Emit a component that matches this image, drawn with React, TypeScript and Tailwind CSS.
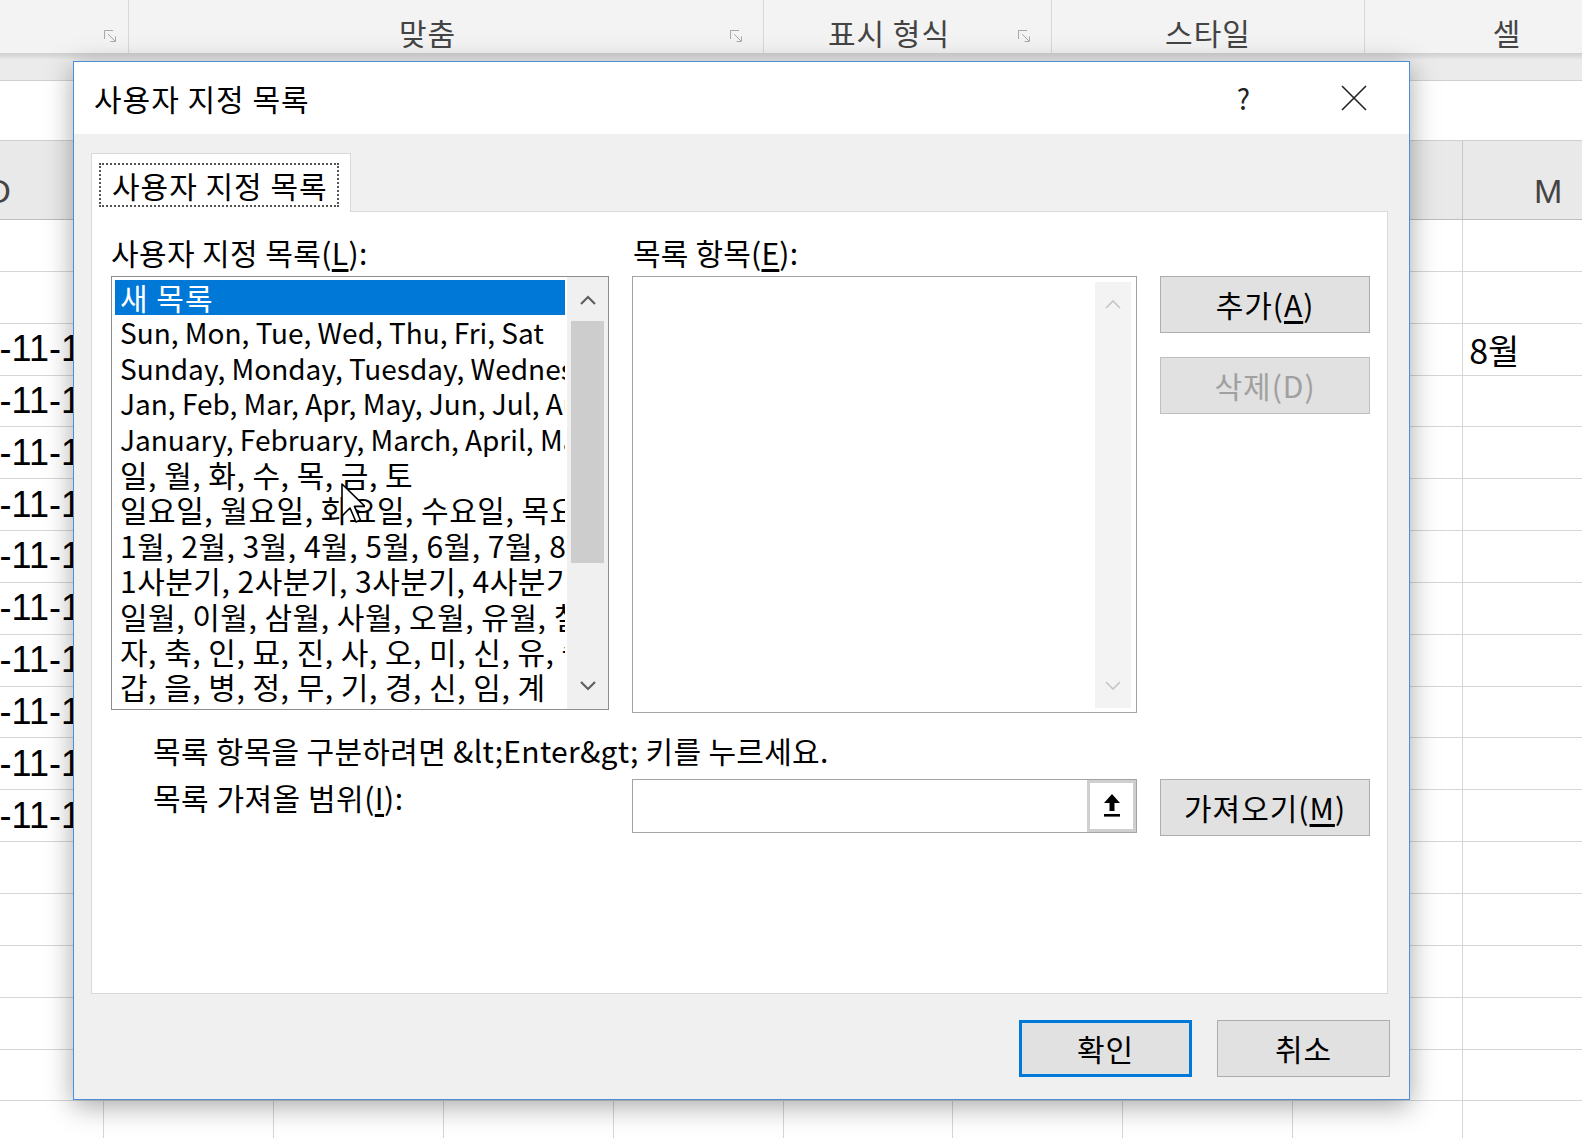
import React from 'react'

const ui = "font-['Noto_Sans_CJK_KR',sans-serif]"
const sheet = "font-['Liberation_Sans','Noto_Sans_CJK_KR',sans-serif]"

// latin rows keep the plain size, hangul rows run a bit wider
const listItems: { text: string; ko: boolean }[] = [
  { text: 'Sun, Mon, Tue, Wed, Thu, Fri, Sat', ko: false },
  { text: 'Sunday, Monday, Tuesday, Wednesday, Thursday, Friday, Saturday', ko: false },
  { text: 'Jan, Feb, Mar, Apr, May, Jun, Jul, Aug, Sep, Oct, Nov, Dec', ko: false },
  { text: 'January, February, March, April, May, June, July, August', ko: false },
  { text: '일, 월, 화, 수, 목, 금, 토', ko: true },
  { text: '일요일, 월요일, 화요일, 수요일, 목요일, 금요일, 토요일', ko: true },
  { text: '1월, 2월, 3월, 4월, 5월, 6월, 7월, 8월, 9월, 10월', ko: true },
  { text: '1사분기, 2사분기, 3사분기, 4사분기', ko: true },
  { text: '일월, 이월, 삼월, 사월, 오월, 유월, 칠월, 팔월', ko: true },
  { text: '자, 축, 인, 묘, 진, 사, 오, 미, 신, 유, 술, 해', ko: true },
  { text: '갑, 을, 병, 정, 무, 기, 경, 신, 임, 계', ko: true },
]

const otherCols = ['E', 'F', 'G', 'H', 'I', 'J', 'K', 'L']
const dates = ['2019-11-10', '2019-11-12', '2019-11-13', '2019-11-14', '2019-11-15', '2019-11-16', '2019-11-17', '2019-11-18', '2019-11-19', '2019-11-19']

function Launcher() {
  return (
    <svg width="14" height="14" viewBox="0 0 14 14" fill="none" stroke="#a8a8a8" strokeWidth="1">
      <path d="M1.5 10V1.5H10" />
      <path d="M5 5l7 7M12.5 7.5v5h-5" />
    </svg>
  )
}

function Chevron({ up, color, width }: { up?: boolean; color: string; width: number }) {
  return (
    <svg width="18" height="10" viewBox="0 0 18 10" fill="none" stroke={color} strokeWidth={width}>
      {up ? <path d="M2 9L9 2l7 7" /> : <path d="M2 1l7 7 7-7" />}
    </svg>
  )
}

function Btn({ children, className = '' }: { children: React.ReactNode; className?: string }) {
  return (
    <div className={`flex items-center justify-center bg-[#e1e1e1] text-[30px] tracking-[1px] ${className}`}>
      {children}
    </div>
  )
}

function Sheet() {
  const rows = Array.from({ length: 18 }, (_, i) => i)
  return (
    <div className={`${sheet} flex flex-col`}>
      {/* ribbon group labels */}
      <div className={`${ui} h-[53px] bg-[#f3f3f3] flex text-[30px] tracking-[1px] text-[#444]`}>
        <div className="w-[129px] shrink-0 flex items-end justify-end pr-[11px] pb-[10px] border-r border-[#d8d8d8]">
          <Launcher />
        </div>
        <div className="w-[635px] shrink-0 flex border-r border-[#d8d8d8]">
          <div className="flex-1 text-center leading-[64px]">맞춤</div>
          <div className="w-[37px] flex items-end pb-[10px] pl-[3px]"><Launcher /></div>
        </div>
        <div className="w-[288px] shrink-0 flex border-r border-[#d8d8d8]">
          <div className="flex-1 text-center leading-[64px]">표시 형식</div>
          <div className="w-[37px] flex items-end pb-[10px] pl-[3px]"><Launcher /></div>
        </div>
        <div className="w-[313px] shrink-0 text-center leading-[64px] border-r border-[#d8d8d8]">스타일</div>
        <div className="w-[284px] shrink-0 text-center leading-[64px]">셀</div>
      </div>
      <div className="h-[6px] bg-gradient-to-b from-[#cfcfcf] to-[#e6e6e6]" />
      <div className="h-[22px] bg-[#ebebeb] border-b border-[#d0d0d0]" />
      <div className="h-[60px] bg-white border-b border-[#cfcfcf]" />
      {/* column headers */}
      <div className="h-[79px] flex bg-[#e9e9e9] border-b border-[#bdbdbd] text-[34px] text-[#444] -ml-[120px]">
        <div className="w-[224px] shrink-0 flex items-center justify-center pt-[22px] pl-[14px] border-r border-[#c8c8c8]">D</div>
        {otherCols.map(c => (
          <div key={c} className="w-[169.9px] shrink-0 flex items-center justify-center pt-[22px] border-r border-[#c8c8c8]">{c}</div>
        ))}
        <div className="w-[169.9px] shrink-0 flex items-center justify-center pt-[22px]">M</div>
      </div>
      {rows.map(r => (
        <div key={r} className="h-[51.85px] shrink-0 flex border-b border-[#d6d6d6] text-[36px] text-black -ml-[120px]">
          <div className="w-[224px] shrink-0 flex items-center justify-end pr-[2px] border-r border-[#d6d6d6]">
            {r >= 2 && r <= 11 ? dates[r - 2] : ''}
          </div>
          {otherCols.map(c => (
            <div key={c} className="w-[169.9px] shrink-0 border-r border-[#d6d6d6]" />
          ))}
          <div className={`${ui} w-[169.9px] shrink-0 flex items-center pl-[6px] text-[34px]`}>{r === 2 ? '8월' : ''}</div>
        </div>
      ))}
    </div>
  )
}

function Dialog() {
  return (
    <div className={`${ui} absolute left-[73px] top-[61px] w-[1337px] h-[1039px] flex flex-col border border-[#4a90d9] bg-[#f0f0f0] text-black shadow-[0_6px_26px_rgba(0,0,0,0.35)]`}>
      {/* title bar */}
      <div className="h-[72px] shrink-0 bg-white flex items-center">
        <span className="ml-[20px] flex-1 text-[30px] tracking-[1px]">사용자 지정 목록</span>
        <span className="mr-[91px] text-[28px] text-[#222]">?</span>
        <svg className="mr-[42px]" width="26" height="26" viewBox="0 0 26 26" fill="none" stroke="#222" strokeWidth="1.6">
          <path d="M1 1l24 24M25 1L1 25" />
        </svg>
      </div>

      <div className="flex-1 flex flex-col pl-[17px] pr-[21px] pt-[19px]">
        {/* tab */}
        <div className="relative z-10 -mb-px w-[260px] h-[59px] bg-white border border-b-0 border-[#d9d9d9] pt-[9px] pl-[7px]">
          <div className="w-[240px] h-[44px] border-2 border-dotted border-[#555] flex items-center pl-[11px] text-[30px] tracking-[1px] leading-none">
            사용자 지정 목록
          </div>
        </div>

        {/* tab panel */}
        <div className="h-[783px] bg-white border border-[#d9d9d9] pl-[19px] pt-[22px]">
          <div className="flex items-start">
            <div className="w-[498px] shrink-0">
              <div className="h-[36px] leading-[36px] text-[30px] tracking-[0.4px]">
                사용자 지정 목록(<span className="underline underline-offset-[4px]">L</span>):
              </div>
              <div className="mt-[6px] h-[434px] border border-[#8e8e8e] flex">
                <div className="w-[455px] pl-[3px] pt-[3px] overflow-hidden">
                  <div className="w-[450px] h-[35.4px] bg-[#0078d7] text-white pl-[5px] leading-[35px] text-[30px] tracking-[1px] whitespace-nowrap">새 목록</div>
                  {listItems.map(it => (
                    <div
                      key={it.text}
                      className={`w-[450px] h-[35.4px] pl-[5px] leading-[35px] whitespace-nowrap overflow-hidden ${it.ko ? 'text-[30px] tracking-[0.5px]' : 'text-[28px]'}`}
                    >
                      {it.text}
                    </div>
                  ))}
                </div>
                <div className="w-[41px] flex flex-col bg-[#f0f0f0]">
                  <div className="h-[44px] flex items-center justify-center pt-[2px]"><Chevron up color="#606060" width={2.2} /></div>
                  <div className="h-[242px] mx-[4px] bg-[#cdcdcd]" />
                  <div className="flex-1 flex items-end justify-center pb-[18px]"><Chevron color="#606060" width={2.2} /></div>
                </div>
              </div>
            </div>

            <div className="ml-[23px] w-[505px] shrink-0">
              <div className="h-[36px] leading-[36px] pl-[1px] text-[30px] tracking-[0.2px]">
                목록 항목(<span className="underline underline-offset-[4px]">E</span>):
              </div>
              <div className="mt-[6px] h-[437px] border border-[#a3a3a3] bg-white flex justify-end pt-[5px] pb-[4px] pr-[5px]">
                <div className="w-[36px] bg-[#f3f3f3] flex flex-col justify-between items-center py-[17px]">
                  <Chevron up color="#c6c6c6" width={1.6} />
                  <Chevron color="#c6c6c6" width={1.6} />
                </div>
              </div>
            </div>

            <div className="ml-[23px] w-[210px] shrink-0 pt-[42px] flex flex-col gap-[24px]">
              <Btn className="h-[57px] border border-[#adadad]">
                추가(<span className="underline underline-offset-[4px]">A</span>)
              </Btn>
              <Btn className="h-[57px] border border-[#bfbfbf] text-[#a0a0a0]">삭제(D)</Btn>
            </div>
          </div>

          <div className="mt-[19px] pl-[42px] h-[36px] leading-[36px] text-[30px] tracking-[0.3px]">
            {'목록 항목을 구분하려면 &lt;Enter&gt; 키를 누르세요.'}
          </div>

          <div className="mt-[11px] flex items-start">
            <div className="w-[521px] shrink-0 pl-[42px] h-[36px] leading-[36px] text-[30px] tracking-[0.5px]">
              목록 가져올 범위(<span className="underline underline-offset-[4px]">I</span>):
            </div>
            <div className="w-[505px] shrink-0 h-[54px] border border-[#a3a3a3] bg-white flex justify-end">
              <div className="w-[49px] h-full border-[3px] border-[#cfcfcf] bg-white flex items-center justify-center">
                <svg width="20" height="26" viewBox="0 0 20 26" fill="#000">
                  <path d="M10 1L2 10h5.5v8h5v-8H18z" />
                  <rect x="2" y="21" width="16" height="2.6" />
                </svg>
              </div>
            </div>
            <Btn className="ml-[23px] w-[210px] h-[57px] border border-[#adadad]">
              가져오기(<span className="underline underline-offset-[4px]">M</span>)
            </Btn>
          </div>
        </div>

        {/* footer buttons */}
        <div className="mt-[26px] -mr-[2px] flex justify-end gap-[25px]">
          <Btn className="w-[173px] h-[57px] border-[3px] border-[#0078d7]">확인</Btn>
          <Btn className="w-[173px] h-[57px] border border-[#adadad]">취소</Btn>
        </div>
      </div>
    </div>
  )
}

function Cursor() {
  return (
    <svg className="absolute left-[341px] top-[483px]" width="24" height="40" viewBox="0 0 12 20">
      <path d="M0.5 0.5v16l4-4 3 7 2.2-1-3-6.8H12z" fill="#fff" stroke="#000" strokeWidth="0.8" strokeLinejoin="round" />
    </svg>
  )
}

export default function App() {
  return (
    <div className="relative w-[1582px] h-[1138px] overflow-hidden bg-white">
      <Sheet />
      <Dialog />
      <Cursor />
    </div>
  )
}
